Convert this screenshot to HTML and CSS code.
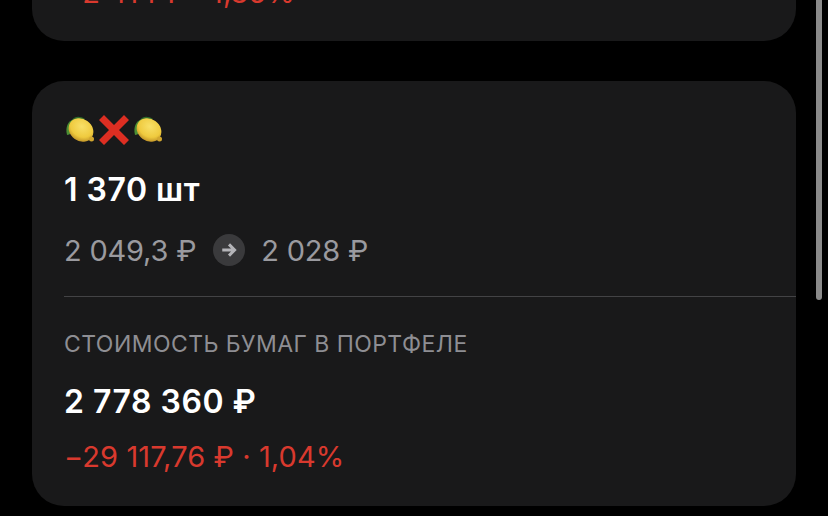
FILE: index.html
```html
<!DOCTYPE html>
<html lang="en">
<head>
<meta charset="UTF-8">
<meta name="viewport" content="width=device-width, initial-scale=1.0">
<title>Сделка</title>
<link rel="stylesheet" href="styles.css">
</head>
<body>
    <div class="screen">
        <div class="list">
            <div class="card card-prev">
                <div class="change prev-change">−2 414 ₽ · 1,35%</div>
            </div>
            <div class="card card-main">
                <div class="emoji-row">
                    <svg class="lemon" viewBox="0 0 30 28" width="30" height="28">
                        <defs>
                            <radialGradient id="lemonFill" cx="0.45" cy="0.35" r="0.7">
                                <stop offset="0" stop-color="#f8e068"/>
                                <stop offset="0.65" stop-color="#efca3e"/>
                                <stop offset="1" stop-color="#b98a24"/>
                            </radialGradient>
                        </defs>
                        <path d="M9 3C3 5 0 11 2 19C5 19 8 16 9 12Z" fill="#4b8f34"/>
                        <path d="M7 4C10 0 15 0 20 3L12 7Z" fill="#2f6b2a"/>
                        <ellipse cx="16" cy="14" rx="13" ry="11" transform="rotate(35 16 14)" fill="url(#lemonFill)"/>
                        <circle cx="26.500" cy="23" r="2.500" fill="#d2a730"/>
                    </svg>
                    <svg class="cross" viewBox="0 0 32 32" width="32" height="32">
                        <path d="M1 6L6 1L16 11L26 1L31 6L21 16L31 26L26 31L16 21L6 31L1 26L11 16Z" fill="#dd2e22"/>
                    </svg>
                    <svg class="lemon" viewBox="0 0 30 28" width="30" height="28">
                        <path d="M9 3C3 5 0 11 2 19C5 19 8 16 9 12Z" fill="#4b8f34"/>
                        <path d="M7 4C10 0 15 0 20 3L12 7Z" fill="#2f6b2a"/>
                        <ellipse cx="16" cy="14" rx="13" ry="11" transform="rotate(35 16 14)" fill="url(#lemonFill)"/>
                        <circle cx="26.500" cy="23" r="2.500" fill="#d2a730"/>
                    </svg>
                </div>
                <div class="amount">1 370 шт</div>
                <div class="prices">
                    <span>2 049,3 ₽</span>
                    <span class="arrow-badge">
                        <svg viewBox="0 0 16 16" width="18" height="18">
                            <path d="M2 8H13M8 3L13 8L8 13" fill="none" stroke="#b4b4b8" stroke-width="2.6"/>
                        </svg>
                    </span>
                    <span>2 028 ₽</span>
                </div>
                <div class="divider"></div>
                <div class="label">СТОИМОСТЬ БУМАГ В ПОРТФЕЛЕ</div>
                <div class="amount total">2 778 360 ₽</div>
                <div class="change">−29 117,76 ₽ · 1,04%</div>
            </div>
        </div>
        <div class="scrollbar"></div>
    </div>
</body>
</html>
```

FILE: styles.css
```css
html, body {
    margin: 0;
    padding: 0;
    height: 100%;
    background-color: #000;
    overflow: hidden;
}
body {
    font-family: Inter, "Liberation Sans", sans-serif;
}
.screen {
    position: relative;
    height: 516px;
    overflow: hidden;
}
.list {
    width: 764px;
    margin-left: 32px;
    display: flex;
    flex-direction: column;
    gap: 40px;
}
.card {
    background-color: #19191a;
    box-sizing: border-box;
    padding-left: 32px;
    overflow: hidden;
}
.card-prev {
    height: 41px;
    flex-shrink: 0;
    border-radius: 0 0 32px 32px;
}
.card-main {
    height: 425px;
    flex-shrink: 0;
    border-radius: 32px;
    padding-top: 33px;
}
.emoji-row {
    display: flex;
    align-items: center;
    height: 32px;
    margin-left: 1px;
    gap: 3px;
}
.amount {
    margin-top: 24px;
    font-size: 32px;
    line-height: 40px;
    font-weight: 600;
    letter-spacing: 0.5px;
    color: #fff;
}
.prices {
    display: flex;
    align-items: center;
    margin-top: 20px;
    height: 40px;
    font-size: 29px;
    letter-spacing: -0.2px;
    color: #9a9a9f;
}
.arrow-badge {
    display: flex;
    align-items: center;
    justify-content: center;
    width: 32px;
    height: 32px;
    margin: 0 16px 0 17px;
    border-radius: 50%;
    background-color: #3a3a3c;
}
.divider {
    height: 1px;
    margin-top: 26px;
    background-color: #434345;
}
.label {
    margin-top: 33px;
    font-size: 23px;
    line-height: 28px;
    letter-spacing: 0.45px;
    color: #8e8e93;
}
.total {
    margin-top: 24px;
}
.change {
    margin-top: 17px;
    font-size: 29px;
    line-height: 36px;
    letter-spacing: 0.1px;
    color: #d9392e;
}
.prev-change {
    margin-top: -25px;
}
.scrollbar {
    position: absolute;
    top: 0;
    right: 6px;
    width: 6px;
    height: 300px;
    border-radius: 0 0 3px 3px;
    background-color: #8a8a8a;
}
```
